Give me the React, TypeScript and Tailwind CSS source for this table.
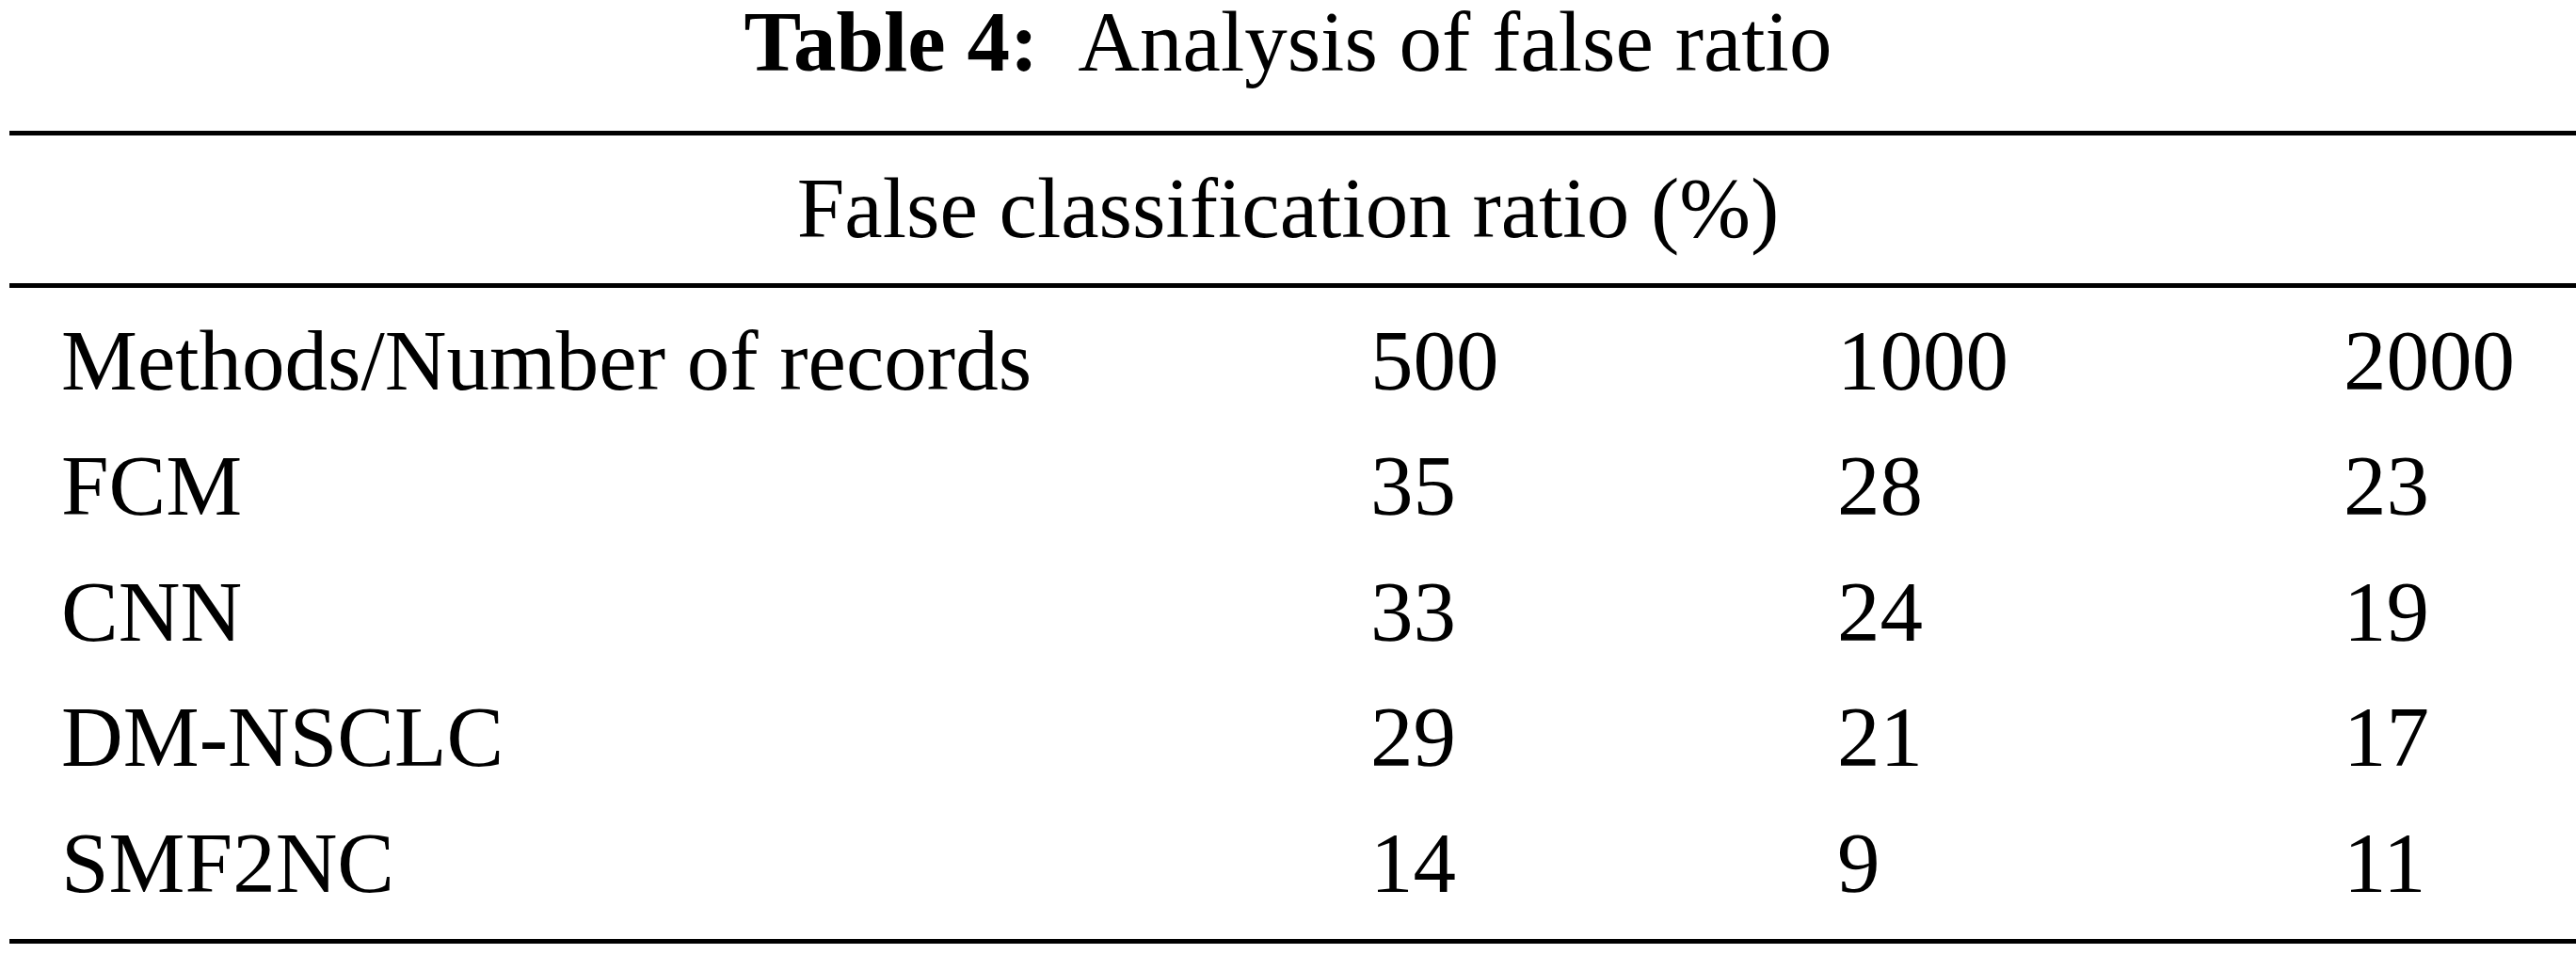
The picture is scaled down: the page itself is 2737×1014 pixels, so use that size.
import React from "react";

const rows: [string, string, string, string][] = [
  ["FCM", "35", "28", "23"],
  ["CNN", "33", "24", "19"],
  ["DM-NSCLC", "29", "21", "17"],
  ["SMF2NC", "14", "9", "11"],
];

function Row({ cells }: { cells: [string, string, string, string] }) {
  return (
    <div className="grid grid-cols-[1391px_496px_538px_1fr] pl-[65px] leading-[133.5px] whitespace-nowrap">
      <div>{cells[0]}</div>
      <div>{cells[1]}</div>
      <div>{cells[2]}</div>
      <div>{cells[3]}</div>
    </div>
  );
}

export default function App() {
  return (
    <div
      className="w-[2737px] h-[1014px] bg-white text-black text-[91px] overflow-hidden"
      style={{ fontFamily: '"Liberation Serif", "Times New Roman", serif' }}
    >
      <div className="text-center leading-[90px] whitespace-nowrap">
        <span className="font-bold">Table 4:</span>
        <span className="ml-[42px]">Analysis of false ratio</span>
      </div>
      <div className="ml-[10px] mt-[49px] h-[5px] bg-black" />
      <div className="text-center leading-[101px] pt-[27px] pb-[29px] whitespace-nowrap">
        False classification ratio (%)
      </div>
      <div className="ml-[10px] h-[5px] bg-black" />
      <div className="mt-[10.5px]">
        <Row cells={["Methods/Number of records", "500", "1000", "2000"]} />
        {rows.map((r) => (
          <Row key={r[0]} cells={r} />
        ))}
      </div>
      <div className="ml-[10px] mt-[14px] h-[5px] bg-black" />
    </div>
  );
}
